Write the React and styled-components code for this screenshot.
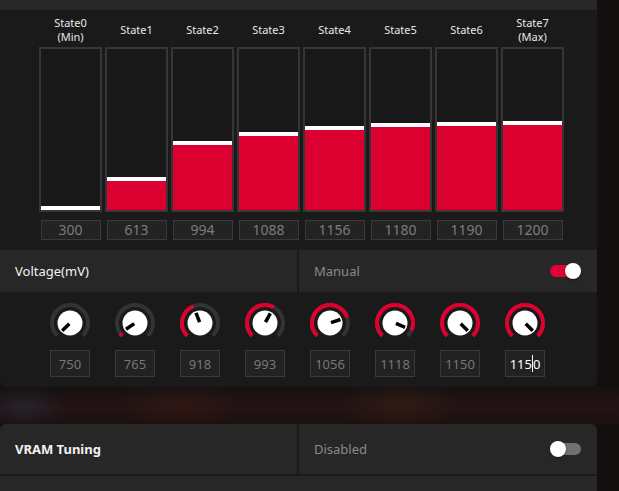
import styled, { createGlobalStyle } from "styled-components";

const GlobalStyle = createGlobalStyle`
  body {
    margin: 0;
    background: #130f0f;
    font-family: "Noto Sans", "Open Sans", sans-serif;
    overflow: hidden;
  }
`;

const states = [
  { label: "State0", sub: "(Min)", value: 300 },
  { label: "State1", value: 613 },
  { label: "State2", value: 994 },
  { label: "State3", value: 1088 },
  { label: "State4", value: 1156 },
  { label: "State5", value: 1180 },
  { label: "State6", value: 1190 },
  { label: "State7", sub: "(Max)", value: 1200 },
];

const voltages = [750, 765, 918, 993, 1056, 1118, 1150, 1150];

const polar = (a, r) => {
  const rad = (a * Math.PI) / 180;
  return [20 + r * Math.sin(rad), 20 - r * Math.cos(rad)];
};

const arcPath = (from, to, r) => {
  const [x1, y1] = polar(from, r);
  const [x2, y2] = polar(to, r);
  const large = to - from > 180 ? 1 : 0;
  return `M ${x1} ${y1} A ${r} ${r} 0 ${large} 1 ${x2} ${y2}`;
};

const Knob = ({ value }) => {
  const angle = -135 + (270 * (value - 750)) / 400;
  const [px1, py1] = polar(angle, 1);
  const [px2, py2] = polar(angle, 11);
  return (
    <KnobSvg width="40" height="40" viewBox="0 0 40 40">
      <path d={arcPath(-135, 135, 18)} stroke="#333" strokeWidth="4" fill="none" />
      {angle > -135 && (
        <path d={arcPath(-135, angle, 18)} stroke="#e0002f" strokeWidth="4" fill="none" />
      )}
      <circle cx="20" cy="20" r="12.5" fill="#fff" />
      <line x1={px1} y1={py1} x2={px2} y2={py2} stroke="#000" strokeWidth="3.5" />
    </KnobSvg>
  );
};

const App = () => {
  return (
    <>
      <GlobalStyle />
      <Panel>
        <TopStrip />
        <StatesGrid>
          {states.map((s) => (
            <StateCol key={s.label}>
              <StateLabel>
                <span>{s.label}</span>
                {s.sub && <span>{s.sub}</span>}
              </StateLabel>
              <BarBox>
                <Fill style={{ height: 4 + (s.value - 300) * 0.094 }} />
              </BarBox>
              <ValueBox>{s.value}</ValueBox>
            </StateCol>
          ))}
        </StatesGrid>
        <SettingRow>
          <Cell>
            <Label>Voltage(mV)</Label>
          </Cell>
          <Cell>
            <Hint>Manual</Hint>
            <Toggle on />
          </Cell>
        </SettingRow>
        <KnobRow>
          {voltages.map((v, i) => (
            <KnobCol key={i}>
              <Knob value={v} />
              <KnobValue active={i === voltages.length - 1}>
                {i === voltages.length - 1 ? (
                  <>
                    115<Caret />0
                  </>
                ) : (
                  v
                )}
              </KnobValue>
            </KnobCol>
          ))}
        </KnobRow>
      </Panel>
      <Backdrop />
      <Card>
        <SettingRow tall>
          <Cell>
            <Label bold>VRAM Tuning</Label>
          </Cell>
          <Cell>
            <Hint>Disabled</Hint>
            <Toggle />
          </Cell>
        </SettingRow>
        <NextRow />
      </Card>
    </>
  );
};

export default App;

const Panel = styled.section`
  width: 597px;
  background: #1a1a1a;
  border-radius: 0 0 6px 6px;
  overflow: hidden;
`;

const TopStrip = styled.div`
  height: 10px;
  background: #272727;
`;

const StatesGrid = styled.div`
  display: grid;
  grid-template-columns: repeat(8, 63px);
  column-gap: 3px;
  padding-left: 39px;
`;

const StateCol = styled.div`
  display: flex;
  flex-direction: column;
  align-items: center;
`;

const StateLabel = styled.div`
  height: 34px;
  margin-top: 3px;
  display: flex;
  flex-direction: column;
  align-items: center;
  justify-content: center;
  color: #e8e8e8;
  font-size: 11px;
  line-height: 14px;
`;

const BarBox = styled.div`
  width: 63px;
  height: 165px;
  box-sizing: border-box;
  border: 2px solid #363636;
  background: #181818;
  display: flex;
  align-items: flex-end;
`;

const Fill = styled.div`
  width: 100%;
  box-sizing: border-box;
  background: #dc0031;
  border-top: 4px solid #fff;
`;

const ValueBox = styled.div`
  margin-top: 8px;
  width: 60px;
  height: 20px;
  box-sizing: border-box;
  border: 1px solid #3a3a3a;
  background: #232323;
  color: #7c7c7c;
  font-size: 14px;
  line-height: 18px;
  text-align: center;
`;

const SettingRow = styled.div`
  margin-top: ${(p) => (p.tall ? "0" : "10px")};
  display: grid;
  grid-template-columns: 297px 1fr;
  column-gap: 2px;
  height: ${(p) => (p.tall ? "50px" : "42px")};
`;

const NextRow = styled.div`
  margin-top: 2px;
  height: 40px;
  background: #272727;
`;

const Cell = styled.div`
  background: #272727;
  display: flex;
  align-items: center;
  justify-content: space-between;
  padding: 0 16px 0 15px;
`;

const Label = styled.span`
  color: #f2f2f2;
  font-size: 13px;
  font-weight: ${(p) => (p.bold ? 700 : 400)};
`;

const Hint = styled.span`
  color: #8a8a8a;
  font-size: 13px;
`;

const Toggle = styled.span`
  position: relative;
  width: 31px;
  height: 12px;
  border-radius: 6px;
  background: ${(p) => (p.on ? "#e2003a" : "#707070")};
  &::after {
    content: "";
    position: absolute;
    top: -2px;
    left: ${(p) => (p.on ? "15px" : "0")};
    width: 16px;
    height: 16px;
    border-radius: 50%;
    background: #fff;
    box-shadow: 0 1px 2px rgba(0, 0, 0, 0.5);
  }
`;

const KnobRow = styled.div`
  display: grid;
  grid-template-columns: repeat(8, 40px);
  column-gap: 25px;
  padding: 11px 0 10px 50px;
`;

const KnobCol = styled.div`
  display: flex;
  flex-direction: column;
  align-items: center;
`;

const KnobSvg = styled.svg`
  display: block;
`;

const KnobValue = styled.div`
  margin-top: 7px;
  width: 40px;
  height: 27px;
  box-sizing: border-box;
  border: 1px solid #3a3a3a;
  background: #222;
  color: ${(p) => (p.active ? "#fff" : "#777")};
  font-size: 13px;
  display: flex;
  align-items: center;
  justify-content: center;
`;

const Caret = styled.span`
  display: inline-block;
  width: 1px;
  height: 17px;
  background: #fff;
`;

const Backdrop = styled.div`
  height: 37px;
  background:
    radial-gradient(ellipse 40px 20px at 25px 20px, rgba(40, 50, 70, 0.5), transparent),
    radial-gradient(ellipse 60px 25px at 180px 18px, rgba(70, 30, 20, 0.35), transparent),
    radial-gradient(ellipse 60px 25px at 400px 18px, rgba(70, 40, 20, 0.35), transparent),
    linear-gradient(180deg, #161212 0%, #241313 55%, #1c1111 100%);
`;

const Card = styled.section`
  width: 597px;
  border-radius: 6px 6px 0 0;
  overflow: hidden;
  background: #1a1a1a;
`;
